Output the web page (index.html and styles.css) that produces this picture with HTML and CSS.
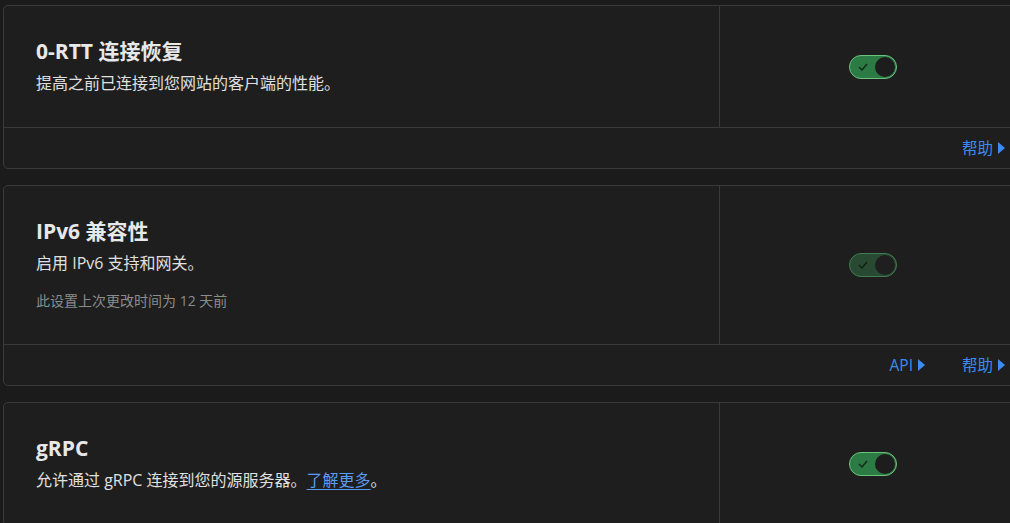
FILE: index.html
```html
<!DOCTYPE html>
<html lang="zh-CN">
<head>
<meta charset="utf-8">
<link rel="stylesheet" href="styles.css">
</head>
<body>
<div class="list">
  <section class="card">
    <div class="main">
      <div class="info">
        <h2 class="title">0-RTT 连接恢复</h2>
        <p class="desc">提高之前已连接到您网站的客户端的性能。</p>
      </div>
      <div class="control">
        <span class="toggle"><svg class="check" viewBox="0 0 10 8" width="10" height="8"><path d="M1 4 L4 7 L9 1" fill="none" stroke-width="1.4"/></svg><span class="knob"></span></span>
      </div>
    </div>
    <div class="footer">
      <a class="more">帮助<span class="tri"></span></a>
    </div>
  </section>

  <section class="card">
    <div class="main">
      <div class="info">
        <h2 class="title">IPv6 兼容性</h2>
        <p class="desc">启用 IPv6 支持和网关。</p>
        <p class="meta">此设置上次更改时间为 12 天前</p>
      </div>
      <div class="control">
        <span class="toggle dim"><svg class="check" viewBox="0 0 10 8" width="10" height="8"><path d="M1 4 L4 7 L9 1" fill="none" stroke-width="1.4"/></svg><span class="knob"></span></span>
      </div>
    </div>
    <div class="footer">
      <a class="more">API<span class="tri"></span></a>
      <a class="more">帮助<span class="tri"></span></a>
    </div>
  </section>

  <section class="card">
    <div class="main">
      <div class="info">
        <h2 class="title">gRPC</h2>
        <p class="desc">允许通过 gRPC 连接到您的源服务器。<a class="inline">了解更多</a>。</p>
      </div>
      <div class="control">
        <span class="toggle"><svg class="check" viewBox="0 0 10 8" width="10" height="8"><path d="M1 4 L4 7 L9 1" fill="none" stroke-width="1.4"/></svg><span class="knob"></span></span>
      </div>
    </div>
  </section>
</div>
</body>
</html>
```

FILE: styles.css
```css
html, body {
  margin: 0;
  background: #1b1b1b;
  overflow: hidden;
}
body {
  font-family: "Open Sans", "Noto Sans CJK SC", sans-serif;
  color: #e4e4e4;
}
.list {
  width: 1024px;
  padding: 5px 0 0 3px;
  display: flex;
  flex-direction: column;
  gap: 16px;
}
.card {
  background: #1e1e1e;
  border: 1px solid #3a3a3a;
  border-radius: 5px;
}
.main {
  display: grid;
  grid-template-columns: 715px 1fr;
  border-bottom: 1px solid #3a3a3a;
}
.info {
  padding: 31px 32px 32px 32px;
}
.title {
  margin: 0;
  font-size: 21px;
  line-height: 28px;
  font-weight: 700;
  color: #e8e8e8;
}
.desc {
  margin: 6px 0 0;
  font-size: 16px;
  line-height: 24px;
  color: #e0e0e0;
}
.meta {
  margin: 16px 0 1px;
  font-size: 14px;
  line-height: 20px;
  color: #8c8c8c;
}
.inline {
  color: #5b9cf2;
  text-decoration: underline;
  text-underline-offset: 3px;
}
.control {
  border-left: 1px solid #3a3a3a;
  display: flex;
  align-items: center;
  justify-content: center;
}
.toggle {
  position: relative;
  box-sizing: border-box;
  width: 48px;
  height: 24px;
  border-radius: 12px;
  background: #2c7a44;
  border: 1px solid #6ac27d;
  display: flex;
  align-items: center;
  justify-content: space-between;
  padding: 0 1px 0 8px;
}
.check path { stroke: #102a18; }
.knob {
  width: 20px;
  height: 20px;
  border-radius: 50%;
  background: #1d1d1d;
}
.toggle.dim {
  background: #284a32;
  border-color: #3f7d4e;
}
.toggle.dim .check path { stroke: #0f2216; }
.toggle.dim .knob { background: #1f1f1f; }
.footer {
  height: 40px;
  display: flex;
  justify-content: flex-end;
  align-items: center;
  gap: 37px;
  padding-right: 21px;
}
.more {
  display: flex;
  align-items: center;
  gap: 5px;
  color: #3d8bf2;
  font-size: 15.5px;
  line-height: 20px;
}
.tri {
  width: 0;
  height: 0;
  border-top: 6px solid transparent;
  border-bottom: 6px solid transparent;
  border-left: 7px solid #3d8bf2;
}
```
